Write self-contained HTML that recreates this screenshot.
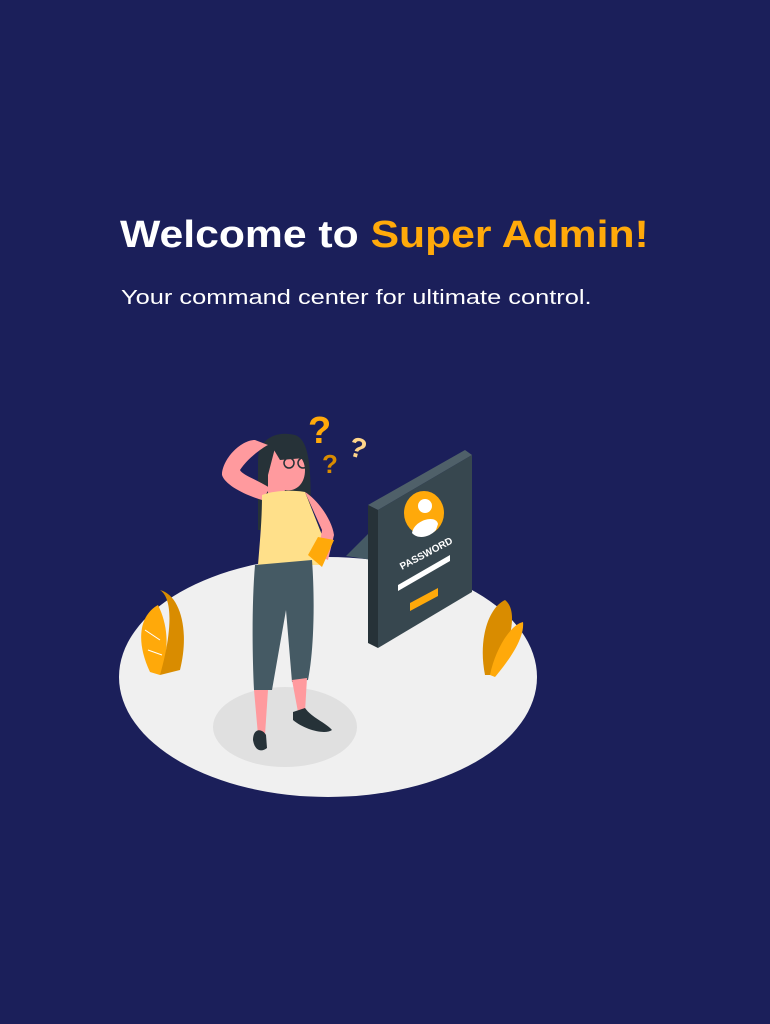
<!DOCTYPE html>
<html><head><meta charset="utf-8"><style>
html,body{margin:0;padding:0;}
body{width:770px;height:1024px;background:#1b1f5a;position:relative;overflow:hidden;font-family:"Liberation Sans",sans-serif;}
h1{position:absolute;left:120px;top:214px;margin:0;font-size:38px;font-weight:bold;color:#fff;white-space:nowrap;transform:scaleX(1.123);transform-origin:0 0;}
h1 span{color:#ffa90a;}
p{position:absolute;left:121px;top:287px;margin:0;font-size:20px;color:#fff;white-space:nowrap;transform:scaleX(1.27);transform-origin:0 0;}
svg{position:absolute;left:0;top:0;}
</style></head><body>
<h1>Welcome to <span>Super Admin!</span></h1>
<p>Your command center for ultimate control.</p>
<svg width="770" height="1024" viewBox="0 0 770 1024">
<ellipse cx="328" cy="677" rx="209" ry="120" fill="#f0f0f0"/>
<ellipse cx="285" cy="727" rx="72" ry="40" fill="#e0e0e0"/>
<path d="M150 672 C135 640 140 615 158 605 C168 625 170 650 160 675 Z" fill="#ffa90a"/>
<path d="M160 675 C170 640 175 600 160 590 C180 595 190 630 180 670 Z" fill="#d98c00"/>
<path d="M145 630 L160 640 M148 650 L162 655" stroke="#fff" stroke-width="1"/>
<path d="M485 675 C478 640 488 608 505 600 C518 610 512 640 495 675 Z" fill="#d98c00"/>
<path d="M490 675 C495 650 510 625 523 622 C525 640 505 665 495 677 Z" fill="#ffa90a"/>
<path d="M346 556 L372 530 L372 560 Z" fill="#455a64"/>
<path d="M368 505 L465 450 L472 455 L378 510 Z" fill="#4f6069"/>
<path d="M368 505 L378 510 L378 648 L368 643 Z" fill="#263238"/>
<path d="M378 510 L472 455 L472 592 L378 648 Z" fill="#37474f"/>
<ellipse cx="424" cy="513" rx="20" ry="22" fill="#ffa90a"/>
<circle cx="425" cy="506" r="7" fill="#fff"/>
<path d="M412 533 C414 520 436 514 438 524 L436 530 C430 537 418 540 412 533 Z" fill="#fff"/>
<text x="402" y="570" font-size="10" font-weight="bold" fill="#fff" transform="rotate(-28 402 570)" font-family="Liberation Sans">PASSWORD</text>
<path d="M398 585 L450 555 L450 561 L398 591 Z" fill="#fff"/>
<path d="M410 603 L438 588 L438 596 L410 611 Z" fill="#ffa90a"/>
<text x="308" y="443" font-size="38" font-weight="bold" fill="#ffa90a" font-family="Liberation Sans">?</text>
<text x="322" y="473" font-size="26" font-weight="bold" fill="#d98c00" font-family="Liberation Sans">?</text>
<text x="349" y="458" font-size="28" font-weight="bold" fill="#ffd58a" font-family="Liberation Sans" transform="rotate(15 360 450)">?</text>
<path d="M258 460 C258 440 275 430 295 435 C310 440 312 470 310 530 L258 530 Z" fill="#263238"/>
<path d="M255 440 C240 440 222 460 222 475 C225 485 245 495 262 500 L270 488 C258 480 242 475 240 470 C248 458 262 448 268 445 Z" fill="#ff9a9e"/>
<path d="M275 448 C290 445 305 455 305 470 C305 485 295 492 285 490 L280 502 L268 500 L268 475 Z" fill="#ff9a9e"/>
<path d="M268 440 C282 432 302 442 305 458 L280 460 Z" fill="#263238"/>
<circle cx="289" cy="463" r="5" fill="none" stroke="#263238" stroke-width="1.5"/>
<circle cx="303" cy="463" r="5" fill="none" stroke="#263238" stroke-width="1.5"/>
<path d="M262 495 C275 490 295 490 305 492 L322 535 L320 565 L258 565 C260 540 262 520 262 495 Z" fill="#ffe08a"/>
<path d="M305 492 C318 500 332 520 334 535 L328 560 L318 555 L322 530 Z" fill="#ff9a9e"/>
<path d="M308 555 L318 537 L334 540 L322 567 Z" fill="#ffa90a"/>
<path d="M255 565 L312 560 C315 600 314 650 308 680 L292 682 L286 610 L272 690 L254 690 C252 650 252 600 255 565 Z" fill="#455a64"/>
<path d="M254 690 L268 690 L265 735 L258 735 Z" fill="#ff9a9e"/>
<path d="M292 680 L307 678 L305 712 L298 712 Z" fill="#ff9a9e"/>
<path d="M253 740 C253 728 262 728 266 735 L267 748 C262 752 255 752 253 740 Z" fill="#263238"/>
<path d="M293 712 L305 708 C312 718 325 722 332 730 C325 735 305 730 293 720 Z" fill="#263238"/>
</svg>
</body></html>
